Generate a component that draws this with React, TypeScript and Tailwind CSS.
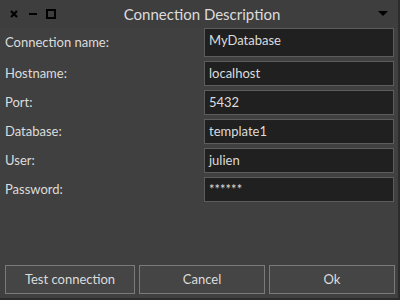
const fields = [
  { label: "Connection name:", value: "MyDatabase", tall: true },
  { label: "Hostname:", value: "localhost" },
  { label: "Port:", value: "5432" },
  { label: "Database:", value: "template1" },
  { label: "User:", value: "julien" },
  { label: "Password:", value: "******" },
];

const TitleBar = () => (
  <div className="flex h-[28px] items-center px-[9px] bg-[#3e3e3e]">
    <div className="flex items-center gap-[7px] w-[60px]">
      <svg width="10" height="10" viewBox="0 0 10 10">
        <path d="M2 2 L8 8 M8 2 L2 8" stroke="#000" strokeWidth="2.2" />
      </svg>
      <svg width="10" height="10" viewBox="0 0 10 10" className="ml-[2px]">
        <path d="M1 5 H9" stroke="#000" strokeWidth="2" />
      </svg>
      <svg width="10" height="10" viewBox="0 0 10 10" className="ml-[1px]">
        <rect x="1" y="1" width="8" height="8" fill="none" stroke="#000" strokeWidth="2" />
      </svg>
    </div>
    <div className="flex-1 text-center text-[15px] text-[#dcdcdc] pl-[6px]">Connection Description</div>
    <div className="w-[60px] flex justify-end pr-[1px]">
      <svg width="10" height="6" viewBox="0 0 10 6">
        <path d="M0 0 H10 L5 5 Z" fill="#000" />
      </svg>
    </div>
  </div>
);

const Field = ({ label, value, tall }: { label: string; value: string; tall?: boolean }) => (
  <div className={`flex items-center ${tall ? "h-[29px]" : "h-[25px]"}`}>
    <div className="w-[199px] text-[13px] text-[#dcdcdc]">{label}</div>
    <div className="h-full w-[190px] bg-[#202020] border border-[#5c5c5c] px-[4px] pt-[2px] text-[13px] text-[#dcdcdc] leading-[18px]">
      {value}
    </div>
  </div>
);

export default function App() {
  return (
    <div
      className="w-[400px] h-[300px] flex flex-col bg-[#404040] border-r-2 border-b-2 border-[#2c2c2c]"
      style={{ fontFamily: "Lato, 'Open Sans', sans-serif" }}
    >
      <TitleBar />
      <div className="flex flex-col gap-[4px] pl-[5px]">
        {fields.map((f) => (
          <Field key={f.label} {...f} />
        ))}
      </div>
      <div className="flex-1" />
      <div className="flex gap-[4px] pl-[5px] pb-[4px] text-[13px] text-[#dcdcdc]">
        <button className="w-[130px] h-[29px] bg-[#454545] border border-[#7a7a7a]">Test connection</button>
        <button className="w-[126px] h-[29px] bg-[#454545] border border-[#7a7a7a]">Cancel</button>
        <button className="w-[126px] h-[29px] bg-[#454545] border border-[#7a7a7a]">Ok</button>
      </div>
    </div>
  );
}
